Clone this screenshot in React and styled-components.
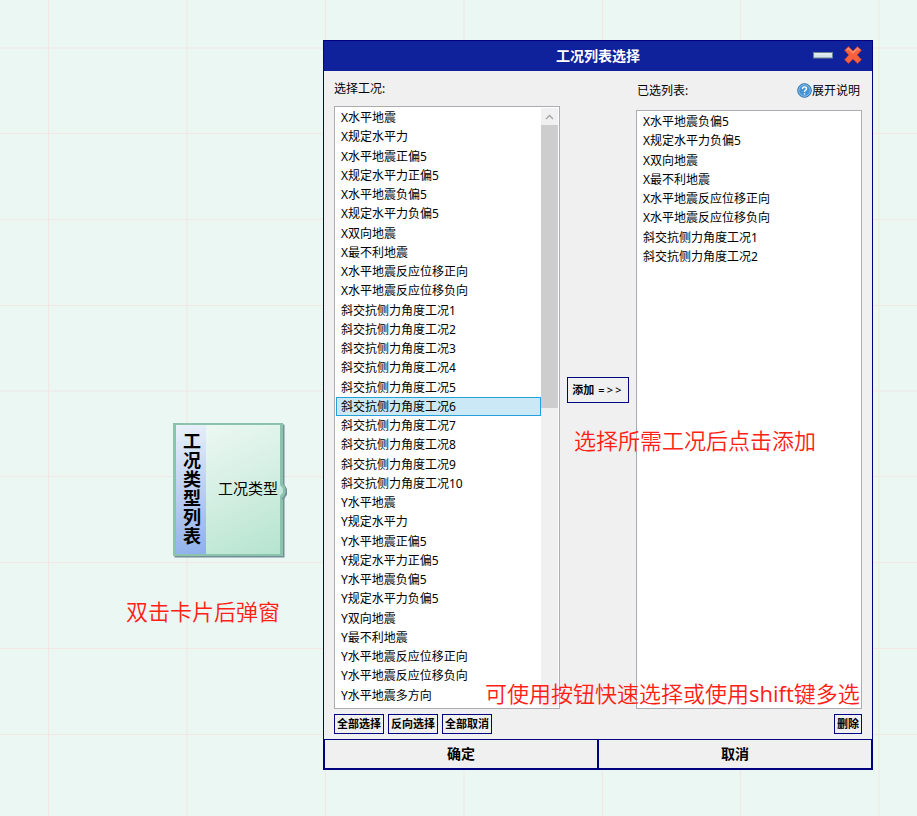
import React from "react";
import styled, { createGlobalStyle } from "styled-components";

const GlobalStyle = createGlobalStyle`
  *, *::before, *::after { box-sizing: border-box; }
  body {
    margin: 0;
    overflow: hidden;
    font-family: "Noto Sans", "Noto Sans CJK SC", sans-serif;
    font-size: 12px;
    color: #000;
  }
`;

const Canvas = styled.main`
  position: relative;
  width: 917px;
  height: 816px;
  overflow: hidden;
  background: #ebf7f3;
`;

const Grid = styled.svg`
  display: block;
`;

const Node = styled.section`
  position: absolute;
  left: 173px;
  top: 423px;
  width: 110px;
  height: 133px;
  display: flex;
  border: 2px solid #8cc3ac;
  border-left-width: 3px;
  border-right-width: 3px;
  background: linear-gradient(155deg, #f0faf5 0%, #d5efe3 50%, #b5e4cf 100%);
  box-shadow: 1.5px 1.5px 0 #758f98;
`;

const NodeTitle = styled.h2`
  width: 30px;
  margin: 0;
  padding: 7px 0 0;
  writing-mode: vertical-rl;
  text-orientation: upright;
  font-size: 18px;
  line-height: 28px;
  letter-spacing: 1px;
  font-weight: 700;
  white-space: nowrap;
  padding-right: 1px;
  background: linear-gradient(165deg, #eaf1fa 0%, #bdd0f0 50%, #8eb0eb 100%);
`;

const NodePort = styled.span`
  flex: 1;
  margin-left: 12px;
  padding-top: 51px;
  font-size: 15px;
  line-height: 24px;
  white-space: nowrap;
`;

const PortKnob = styled.svg`
  position: absolute;
  right: -7px;
  top: 56px;
`;

const Dialog = styled.section`
  position: absolute;
  left: 323px;
  top: 40px;
  width: 550px;
  height: 730px;
  display: flex;
  flex-direction: column;
  border: 1px solid #000080;
  background: #f0f0f0;
`;

const TitleBar = styled.header`
  height: 30px;
  flex: none;
  display: grid;
  grid-template-columns: 1fr auto 1fr;
  align-items: center;
  background: #0f219b;
  color: #fff;
`;

const DialogTitle = styled.h1`
  grid-column: 2;
  margin: 0;
  font-size: 14px;
  line-height: 20px;
  font-weight: 700;
`;

const WindowControls = styled.div`
  display: flex;
  justify-content: flex-end;
  align-items: center;
  gap: 11px;
  padding: 0 10px 2px 0;
`;

const Body = styled.div`
  flex: 1;
  min-height: 0;
  display: grid;
  grid-template-columns: 226px 1fr 226px;
  padding: 0 10px;
`;

const Column = styled.div`
  display: flex;
  flex-direction: column;
  min-height: 0;
`;

const MiddleColumn = styled.div`
  padding: 306px 0 0 7px;
`;

const ColumnHead = styled.div`
  height: ${(p) => p.$height}px;
  flex: none;
  display: flex;
  justify-content: space-between;
  align-items: flex-start;
  padding: ${(p) => p.$top}px 2px 0 ${(p) => p.$left}px;
  font-size: 12px;
  line-height: 18px;
`;

const HelpLink = styled.span`
  display: flex;
  align-items: center;
`;

const ListBox = styled.div`
  flex: 1;
  min-height: 0;
  display: flex;
  padding: 1px;
  border: 1px solid #abadb3;
  background: #fff;
`;

const Items = styled.ul`
  flex: 1;
  margin: 0;
  padding: 0;
  list-style: none;
`;

const Item = styled.li`
  height: 19.25px;
  padding-left: 4px;
  border: 1px solid ${(p) => (p.$selected ? "#26a0da" : "transparent")};
  background: ${(p) => (p.$selected ? "#cbe8f6" : "transparent")};
  line-height: 17.7px;
  white-space: nowrap;
`;

const Scrollbar = styled.div`
  width: 17px;
  display: flex;
  flex-direction: column;
  background: #f0f0f0;
`;

const ScrollArrow = styled.div`
  height: 17px;
  display: flex;
  align-items: center;
  justify-content: center;
`;

const ScrollThumb = styled.div`
  height: 283px;
  background: #cdcdcd;
`;

const ScrollSpace = styled.div`
  flex: 1;
`;

const Actions = styled.div`
  height: 30px;
  flex: none;
  display: flex;
  justify-content: ${(p) => (p.$end ? "flex-end" : "flex-start")};
  align-items: center;
  gap: 4px;
`;

const SmallButton = styled.button`
  height: 20px;
  width: ${(p) => p.$width}px;
  padding: 0;
  border: 1px solid #000080;
  background: #f0f0f0;
  color: #000;
  font: 700 11px/18px "Noto Sans", "Noto Sans CJK SC", sans-serif;
  white-space: nowrap;
`;

const AddButton = styled(SmallButton)`
  height: 26px;
  line-height: 24px;
`;

const Arrow = styled.span`
  margin-left: 1px;
  font-weight: 500;
  letter-spacing: 2.2px;
`;

const Footer = styled.footer`
  height: 30px;
  flex: none;
  display: grid;
  grid-template-columns: 274px 1fr;
  border: 1px solid #000080;
`;

const FooterButton = styled.button`
  padding: 0 0 1px;
  border: 0 solid #000080;
  border-right-width: ${(p) => (p.$divider ? "2px" : "0")};
  background: #f0f0f0;
  color: #000;
  font: 700 14px/20px "Noto Sans", "Noto Sans CJK SC", sans-serif;
`;

const Note = styled.p`
  position: absolute;
  left: ${(p) => p.$x}px;
  top: ${(p) => p.$y}px;
  margin: 0;
  color: #ff2113;
  font-size: 22px;
  line-height: 32px;
  font-weight: 350;
  white-space: nowrap;
`;

const NoteLatin = styled.span`
  font-family: "Open Sans", sans-serif;
  font-weight: 400;
`;

const axisCases = (axis) =>
  ["水平地震", "规定水平力", "水平地震正偏5", "规定水平力正偏5", "水平地震负偏5",
    "规定水平力负偏5", "双向地震", "最不利地震", "水平地震反应位移正向",
    "水平地震反应位移负向"].map((name) => axis + name);

const SKEW = "斜交抗侧力角度工况";
const available = [
  ...axisCases("X"),
  ...Array.from({ length: 10 }, (_, i) => SKEW + (i + 1)),
  ...axisCases("Y"),
  "Y水平地震多方向",
];
const chosen = [...axisCases("X").slice(4), SKEW + "1", SKEW + "2"];
const selected = SKEW + "6";

const V_LINES = [48.5, 187, 325.5, 464, 602.5, 740.5, 879];
const H_LINES = [48, 133.5, 219.5, 305.5, 391, 476.5, 562.5, 648.5, 734.5];

function MinimizeIcon() {
  return (
    <svg width="20" height="8" viewBox="0 0 20 8">
      <rect x="0.5" y="1.5" width="19" height="5.5" fill="#d5e4e8" stroke="#6c8295" />
      <path d="M2 3H18" stroke="#edf5f6" />
    </svg>
  );
}

function CloseIcon() {
  return (
    <svg width="18" height="18" viewBox="0 0 18 18">
      <path
        d="M4.4 0.6L9 5L13.6 0.6L17.4 4.2L13.2 9L17.4 13.8L13.6 17.4L9 13L4.4 17.4L0.6 13.8L4.8 9L0.6 4.2Z"
        fill="#f9603f" stroke="#b5423f" strokeWidth="1" strokeLinejoin="round"
      />
      <path d="M2.6 4.2L4.4 2.4L9 6.8L13.6 2.4L15.4 4.2" stroke="#ff9676" strokeWidth="1.2" strokeLinejoin="round" fill="none" />
    </svg>
  );
}

function HelpIcon() {
  return (
    <svg width="15" height="16" viewBox="0 0 15 16">
      <circle cx="7.5" cy="7.5" r="6.8" fill="#4793d3" stroke="#3270a8" />
      <circle cx="7.5" cy="7.5" r="5.7" fill="none" stroke="#8bc0e8" />
      <path d="M5.5 5.9C5.5 3.2 9.6 3.3 9.5 5.7C9.4 7.2 7.5 7.2 7.5 8.9M7.5 10.2V11.5" fill="none" stroke="#fff" strokeWidth="1.4" />
    </svg>
  );
}

export default function App() {
  return (
    <Canvas>
      <GlobalStyle />
      <Grid width="917" height="816" stroke="#f1e8e6" strokeWidth="1.2">
        {V_LINES.map((x) => <line key={x} x1={x} x2={x} y1="0" y2="816" />)}
        {H_LINES.map((y) => <line key={y} x1="0" x2="917" y1={y} y2={y} />)}
      </Grid>

      <Node>
        <NodeTitle>工况类型列表</NodeTitle>
        <NodePort>工况类型</NodePort>
        <PortKnob width="9" height="20" viewBox="0 0 9 20">
          <path d="M4 3L7 4.5L9 8V13.5L6.5 17.5L4 18.5Z" fill="#758f98" />
          <path d="M2 1.5L5.5 3.5L7.5 7V12L5.5 16L2 18Z" fill="#8cc3ac" />
          <path d="M0 4L2.5 4.5L4.8 7.5V11.5L2.5 14.5L0 15Z" fill="#c5e9d9" />
        </PortKnob>
      </Node>

      <Dialog>
        <TitleBar>
          <DialogTitle>工况列表选择</DialogTitle>
          <WindowControls>
            <MinimizeIcon />
            <CloseIcon />
          </WindowControls>
        </TitleBar>
        <Body>
          <Column>
            <ColumnHead $height={35} $top={9} $left={0}>选择工况:</ColumnHead>
            <ListBox>
              <Items>
                {available.map((name) => <Item key={name} $selected={name === selected}>{name}</Item>)}
              </Items>
              <Scrollbar>
                <ScrollArrow>
                  <svg width="9" height="6" viewBox="0 0 9 6">
                    <path d="M1 5L4.5 1.5L8 5" fill="none" stroke="#a3a3a3" strokeWidth="1.3" />
                  </svg>
                </ScrollArrow>
                <ScrollThumb />
                <ScrollSpace />
              </Scrollbar>
            </ListBox>
            <Actions>
              <SmallButton $width={50}>全部选择</SmallButton>
              <SmallButton $width={50}>反向选择</SmallButton>
              <SmallButton $width={50}>全部取消</SmallButton>
            </Actions>
          </Column>
          <MiddleColumn>
            <AddButton $width={62}>添加 <Arrow>=&gt;&gt;</Arrow></AddButton>
          </MiddleColumn>
          <Column>
            <ColumnHead $height={39} $top={11} $left={1}>
              已选列表:
              <HelpLink><HelpIcon />展开说明</HelpLink>
            </ColumnHead>
            <ListBox>
              <Items>
                {chosen.map((name) => <Item key={name}>{name}</Item>)}
              </Items>
            </ListBox>
            <Actions $end>
              <SmallButton $width={28}>删除</SmallButton>
            </Actions>
          </Column>
        </Body>
        <Footer>
          <FooterButton $divider>确定</FooterButton>
          <FooterButton>取消</FooterButton>
        </Footer>
      </Dialog>

      <Note $x={126} $y={595}>双击卡片后弹窗</Note>
      <Note $x={574} $y={424}>选择所需工况后点击添加</Note>
      <Note $x={485} $y={677}>可使用按钮快速选择或使用<NoteLatin>shift</NoteLatin>键多选</Note>
    </Canvas>
  );
}
